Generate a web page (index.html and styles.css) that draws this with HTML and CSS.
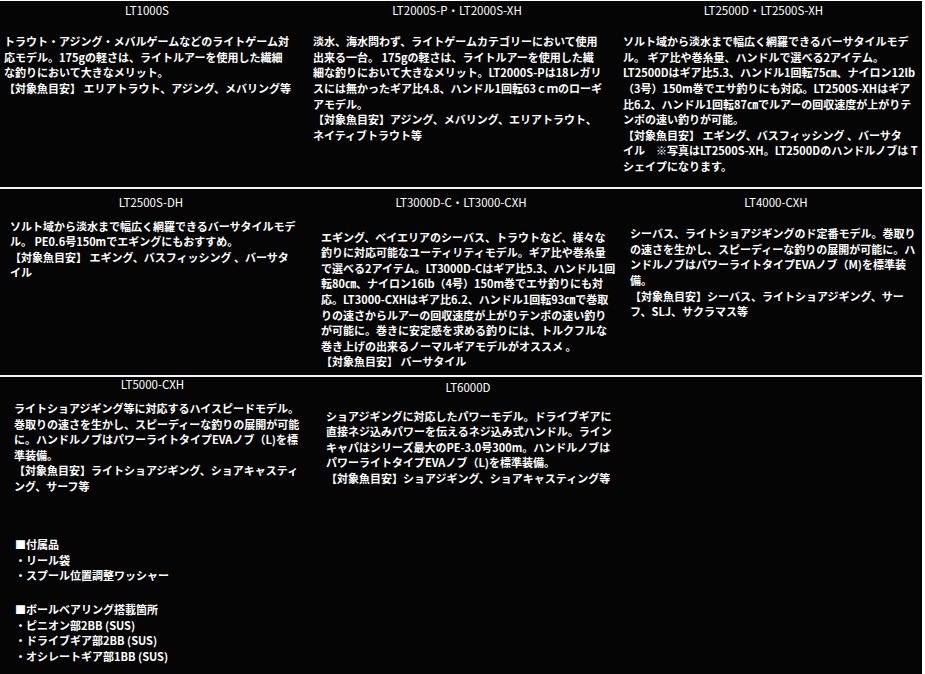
FILE: index.html
```html
<!DOCTYPE html>
<html lang="ja">
<head>
<meta charset="utf-8">
<title>LT Series</title>
<link rel="stylesheet" href="styles.css">
</head>
<body>
<div class="table">
  <div class="row row1">
    <div class="cell c11">
      <div class="title">LT1000S</div>
      <p class="text">トラウト・アジング・メバルゲームなどのライトゲーム対<br>応モデル。175gの軽さは、ライトルアーを使用した繊細<br>な釣りにおいて大きなメリット。<br>【対象魚目安】 エリアトラウト、アジング、メバリング等</p>
    </div>
    <div class="cell c12">
      <div class="title">LT2000S-P・LT2000S-XH</div>
      <p class="text">淡水、海水問わず、ライトゲームカテゴリーにおいて使用<br>出来る一台。 175gの軽さは、ライトルアーを使用した繊<br>細な釣りにおいて大きなメリット。LT2000S-Pは18レガリ<br>スには無かったギア比4.8、ハンドル1回転63ｃｍのローギ<br>アモデル。<br>【対象魚目安】アジング、メバリング、エリアトラウト、<br>ネイティブトラウト等</p>
    </div>
    <div class="cell c13">
      <div class="title">LT2500D・LT2500S-XH</div>
      <p class="text">ソルト域から淡水まで幅広く網羅できるバーサタイルモデ<br>ル。 ギア比や巻糸量、ハンドルで選べる2アイテム。<br>LT2500Dはギア比5.3、ハンドル1回転75㎝、ナイロン12lb<br>（3号）150m巻でエサ釣りにも対応。LT2500S-XHはギア<br>比6.2、ハンドル1回転87㎝でルアーの回収速度が上がりテ<br>ンポの速い釣りが可能。<br>【対象魚目安】 エギング、バスフィッシング 、バーサタ<br>イル　※写真はLT2500S-XH。LT2500Dのハンドルノブは T<br>シェイプになります。</p>
    </div>
  </div>
  <div class="row row2">
    <div class="cell c21">
      <div class="title">LT2500S-DH</div>
      <p class="text">ソルト域から淡水まで幅広く網羅できるバーサタイルモデ<br>ル。 PE0.6号150mでエギングにもおすすめ。<br>【対象魚目安】 エギング、バスフィッシング 、バーサタ<br>イル</p>
    </div>
    <div class="cell c22">
      <div class="title">LT3000D-C・LT3000-CXH</div>
      <p class="text">エギング、ベイエリアのシーバス、トラウトなど、様々な<br>釣りに対応可能なユーティリティモデル。ギア比や巻糸量<br>で選べる2アイテム。LT3000D-Cはギア比5.3、ハンドル1回<br>転80㎝、ナイロン16lb（4号）150m巻でエサ釣りにも対<br>応。LT3000-CXHはギア比6.2、ハンドル1回転93㎝で巻取<br>りの速さからルアーの回収速度が上がりテンポの速い釣り<br>が可能に。巻きに安定感を求める釣りには、トルクフルな<br>巻き上げの出来るノーマルギアモデルがオススメ 。<br>【対象魚目安】 バーサタイル</p>
    </div>
    <div class="cell c23">
      <div class="title">LT4000-CXH</div>
      <p class="text">シーバス、ライトショアジギングのド定番モデル。巻取り<br>の速さを生かし、スピーディーな釣りの展開が可能に。ハ<br>ンドルノブはパワーライトタイプEVAノブ（M)を標準装<br>備。<br>【対象魚目安】シーバス、ライトショアジギング、サー<br>フ、SLJ、サクラマス等</p>
    </div>
  </div>
  <div class="row row3">
    <div class="cell c31">
      <div class="title">LT5000-CXH</div>
      <p class="text">ライトショアジギング等に対応するハイスピードモデル。<br>巻取りの速さを生かし、スピーディーな釣りの展開が可能<br>に。ハンドルノブはパワーライトタイプEVAノブ（L)を標<br>準装備。<br>【対象魚目安】ライトショアジギング、ショアキャスティ<br>ング、サーフ等</p>
      <p class="text list first">■付属品<br>・リール袋<br>・スプール位置調整ワッシャー</p>
      <p class="text list">■ボールベアリング搭載箇所<br>・ピニオン部2BB (SUS)<br>・ドライブギア部2BB (SUS)<br>・オシレートギア部1BB (SUS)</p>
    </div>
    <div class="cell c32">
      <div class="title">LT6000D</div>
      <p class="text">ショアジギングに対応したパワーモデル。ドライブギアに<br>直接ネジ込みパワーを伝えるネジ込み式ハンドル。ライン<br>キャパはシリーズ最大のPE-3.0号300m。ハンドルノブは<br>パワーライトタイプEVAノブ（L)を標準装備。<br>【対象魚目安】ショアジギング、ショアキャスティング等</p>
    </div>
    <div class="cell c33"></div>
  </div>
</div>
</body>
</html>
```
FILE: styles.css
```css
html, body {
  margin: 0;
  padding: 0;
  background: #ffffff;
}

body {
  font-family: "Noto Sans CJK JP", "Noto Sans", sans-serif;
  font-size: 11px;
  font-weight: 700;
  line-height: 15.6px;
  color: #ffffff;
}

.table {
  width: 922px;
  height: 674px;
  background: #050505;
  border-top: 1px solid #ffffff;
  box-sizing: border-box;
  display: flex;
  flex-direction: column;
}

.row {
  display: grid;
  grid-template-columns: 308px 309px 305px;
  overflow: visible;
}

.row1 {
  height: 186px;
  border-bottom: 2px solid #f4f4f4;
}

.row2 {
  height: 186px;
  border-bottom: 2px solid #f4f4f4;
}

.row3 {
  flex: 1;
}

.cell {
  min-width: 0;
  display: flex;
  flex-direction: column;
}

.title {
  text-align: center;
  white-space: nowrap;
  font-weight: 400;
  font-size: 11.5px;
}

.text {
  margin: 0;
  white-space: nowrap;
}

/* row 1 */
.c11 { padding: 2px 18px 0 4px; }
.c12 { padding: 2px 16px 0 5px; }
.c13 { padding: 2px 18px 0 6px; }
.c11 .text, .c12 .text, .c13 .text { margin-top: 15.6px; }

/* row 2 */
.c21 { padding: 6px 16px 0 10px; }
.c22 { padding: 6px 16px 0 13px; }
.c23 { padding: 6px 0 0 13px; }
.c21 .text { margin-top: 8px; }
.c22 .text { margin-top: 19px; }
.c23 .text { margin-top: 15.6px; }

/* row 3 */
.c31 { padding: 0 17px 0 14px; }
.c32 { padding: 3px 7px 0 18px; }
.c31 .text { margin-top: 8.4px; }
.c32 .text { margin-top: 13px; }

.c31 .list { margin-top: 18px; padding-left: 1px; }
.c31 .list.first { margin-top: 42.7px; }
```
